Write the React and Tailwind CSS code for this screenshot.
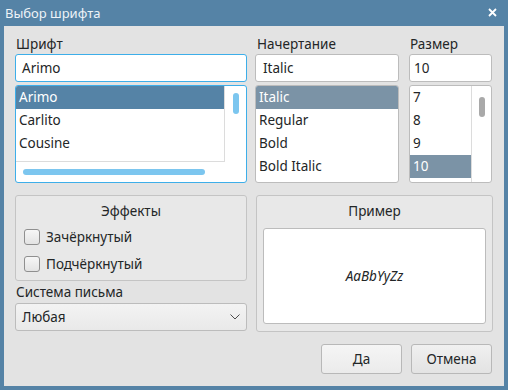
import React from "react";

const fonts = ["Arimo", "Carlito", "Cousine"];
const styles = ["Italic", "Regular", "Bold", "Bold Italic"];
const sizes = ["7", "8", "9", "10"];

function Row({ label, selected, tone }) {
  const bg = selected
    ? tone === "active"
      ? "bg-[#5583a6] text-white"
      : "bg-[#7b93a6] text-white"
    : "";
  return (
    <div className={`h-[23px] shrink-0 flex items-center px-[3px] leading-none ${bg}`}>
      {label}
    </div>
  );
}

function Checkbox({ label }) {
  return (
    <label className="flex items-center gap-[6px] h-[16px]">
      <span className="w-[16px] h-[16px] rounded-[3px] border border-[#8f8f8f] bg-gradient-to-b from-[#f6f6f6] to-[#e3e3e3]" />
      <span>{label}</span>
    </label>
  );
}

export default function App() {
  return (
    <div className="w-[508px] h-[390px] bg-[#5583a6] flex flex-col font-['Noto_Sans',sans-serif] text-[13.5px] text-[#232627]">
      {/* заголовок окна */}
      <div className="h-[26px] shrink-0 flex items-center justify-between pl-[5px] pr-[11px] text-[13px] text-[#eef3f8]">
        <span className="pt-[2px]">Выбор шрифта</span>
        <svg width="9" height="9" viewBox="0 0 9 9" className="mb-[2px]">
          <path d="M1 1 L8 8 M8 1 L1 8" stroke="#ffffff" strokeWidth="1.8" />
        </svg>
      </div>

      <div className="mx-[4px] mb-[4px] flex-1 bg-[#e3e3e3] px-[11px] pt-[10px] flex flex-col">
        {/* шрифт / начертание / размер */}
        <div className="flex">
          <div className="w-[232px] flex flex-col">
            <div className="h-[17px] leading-[17px] pl-[1px] mb-[1px]">Шрифт</div>
            <div className="h-[28px] bg-white border border-[#3daee9] rounded-[3px] flex items-center px-[6px]">
              Arimo
            </div>
            <div className="mt-[3px] h-[98px] bg-white border border-[#3daee9] rounded-[3px] flex flex-col overflow-hidden">
              <div className="flex h-[76px]">
                <div className="w-[209px] flex flex-col overflow-hidden border-r border-b border-[#dcdcdc]">
                  {fonts.map((f, i) => (
                    <Row key={f} label={f} selected={i === 0} tone="active" />
                  ))}
                </div>
                <div className="flex-1 flex justify-center pt-[7px]">
                  <div className="w-[6px] h-[21px] rounded-full bg-[#7cc6ef]" />
                </div>
              </div>
              <div className="flex-1 flex items-center pl-[7px]">
                <div className="w-[182px] h-[6px] rounded-full bg-[#7cc6ef]" />
              </div>
            </div>
          </div>

          <div className="w-[144px] ml-[8px] flex flex-col">
            <div className="h-[17px] leading-[17px] pl-[2px] mb-[1px]">Начертание</div>
            <div className="h-[28px] bg-white border border-[#bcbcbc] rounded-[3px] flex items-center px-[7px]">
              Italic
            </div>
            <div className="mt-[3px] h-[98px] bg-white border border-[#bcbcbc] rounded-[3px] flex flex-col overflow-hidden">
              {styles.map((s, i) => (
                <Row key={s} label={s} selected={i === 0} />
              ))}
            </div>
          </div>

          <div className="w-[83px] ml-[10px] flex flex-col">
            <div className="h-[17px] leading-[17px] pl-[1px] mb-[1px]">Размер</div>
            <div className="h-[28px] bg-white border border-[#bcbcbc] rounded-[3px] flex items-center px-[4px]">
              10
            </div>
            <div className="mt-[3px] h-[98px] bg-white border border-[#bcbcbc] rounded-[3px] flex overflow-hidden">
              <div className="w-[62px] flex flex-col overflow-hidden border-r border-[#dcdcdc]">
                {sizes.map((s, i) => (
                  <Row key={s} label={s} selected={i === 3} />
                ))}
              </div>
              <div className="flex-1 flex justify-center pt-[11px]">
                <div className="w-[6px] h-[20px] rounded-full bg-[#a9a9a9]" />
              </div>
            </div>
          </div>
        </div>

        {/* эффекты / пример */}
        <div className="flex mt-[12px]">
          <div className="w-[232px] flex flex-col">
            <div className="h-[86px] border border-[#c4c4c4] rounded-[3px] bg-[#e8e8e8] flex flex-col">
              <div className="h-[31px] flex items-center justify-center">Эффекты</div>
              <div className="flex flex-col gap-[11px] pl-[8px] mt-[2px]">
                <Checkbox label="Зачёркнутый" />
                <Checkbox label="Подчёркнутый" />
              </div>
            </div>
            <div className="h-[18px] leading-[18px] pl-[1px] mt-[2px] mb-[2px]">Система письма</div>
            <div className="h-[28px] rounded-[3px] border border-[#bcbcbc] bg-gradient-to-b from-[#f3f3f3] to-[#e9e9e9] flex items-center justify-between pl-[6px] pr-[6px]">
              <span>Любая</span>
              <svg width="10" height="6" viewBox="0 0 10 6">
                <path d="M0.5 0.5 L5 5 L9.5 0.5" fill="none" stroke="#4d4d4d" strokeWidth="1" />
              </svg>
            </div>
          </div>

          <div className="w-[237px] ml-[9px] h-[137px] border border-[#c4c4c4] rounded-[3px] bg-[#e8e8e8] flex flex-col px-[6px]">
            <div className="h-[31px] flex items-center justify-center">Пример</div>
            <div className="h-[96px] mt-[1px] bg-white border border-[#bcbcbc] rounded-[3px] flex items-center justify-center italic">
              AaBbYyZz
            </div>
          </div>
        </div>

        {/* кнопки */}
        <div className="flex justify-end gap-[9px] mt-[12px] pr-[1px]">
          <button className="w-[81px] h-[30px] rounded-[3px] border border-[#b8b8b8] bg-gradient-to-b from-[#f5f5f5] to-[#ebebeb]">
            Да
          </button>
          <button className="w-[81px] h-[30px] rounded-[3px] border border-[#b8b8b8] bg-gradient-to-b from-[#f0f0f0] to-[#e3e3e3]">
            Отмена
          </button>
        </div>
      </div>
    </div>
  );
}
